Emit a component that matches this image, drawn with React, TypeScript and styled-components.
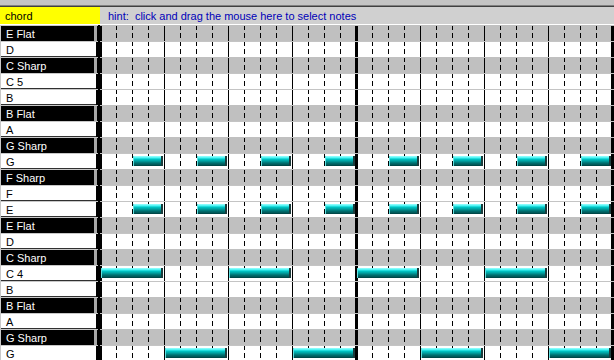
import styled, { createGlobalStyle } from 'styled-components';

const GlobalStyle = createGlobalStyle`
  html, body {
    margin: 0;
    padding: 0;
    background: #c0c0c0;
    overflow: hidden;
  }
  * {
    box-sizing: border-box;
  }
`;

interface Note {
  start: number; // in 16px steps
  length: number;
}

interface PitchRow {
  name: string;
  accidental: boolean;
  notes: Note[];
}

const STEP = 16;

const every = (first: number, gap: number, length: number, count: number): Note[] =>
  Array.from({ length: count }, (_, i) => ({ start: first + i * gap, length }));

const rows: PitchRow[] = [
  { name: 'E Flat', accidental: true, notes: [] },
  { name: 'D', accidental: false, notes: [] },
  { name: 'C Sharp', accidental: true, notes: [] },
  { name: 'C 5', accidental: false, notes: [] },
  { name: 'B', accidental: false, notes: [] },
  { name: 'B Flat', accidental: true, notes: [] },
  { name: 'A', accidental: false, notes: [] },
  { name: 'G Sharp', accidental: true, notes: [] },
  { name: 'G', accidental: false, notes: every(2, 4, 2, 8) },
  { name: 'F Sharp', accidental: true, notes: [] },
  { name: 'F', accidental: false, notes: [] },
  { name: 'E', accidental: false, notes: every(2, 4, 2, 8) },
  { name: 'E Flat', accidental: true, notes: [] },
  { name: 'D', accidental: false, notes: [] },
  { name: 'C Sharp', accidental: true, notes: [] },
  { name: 'C 4', accidental: false, notes: every(0, 8, 4, 4) },
  { name: 'B', accidental: false, notes: [] },
  { name: 'B Flat', accidental: true, notes: [] },
  { name: 'A', accidental: false, notes: [] },
  { name: 'G Sharp', accidental: true, notes: [] },
  { name: 'G', accidental: false, notes: every(4, 8, 4, 4) },
];

const Window = styled.div`
  width: 614px;
  height: 360px;
  overflow: hidden;
  display: flex;
  flex-direction: column;
  background: #c0c0c0;
  font-family: 'Liberation Sans', Arial, sans-serif;
  font-size: 11px;
`;

const TopStrip = styled.div`
  height: 6px;
  flex: none;
  background: #c4c4c4;
  border-bottom: 1px solid #808080;
`;

const Header = styled.div`
  height: 19px;
  flex: none;
  display: flex;
  border-top: 1px solid #404040;
  border-bottom: 1px solid #ffffff;
  background: #d0d0d0;
`;

const ChordBox = styled.div`
  width: 100px;
  flex: none;
  display: flex;
  align-items: center;
  padding-left: 5px;
  padding-top: 1px;
  background: #ffff00;
  color: #000000;
`;

const Hint = styled.div`
  flex: 1;
  display: flex;
  align-items: center;
  padding-left: 8px;
  color: #0000b8;
  white-space: nowrap;
`;

const Body = styled.div`
  flex: 1;
  display: flex;
  min-height: 0;
`;

const LabelColumn = styled.div`
  width: 98px;
  flex: none;
  display: flex;
  flex-direction: column;
  background: #c0c0c0;
`;

const Label = styled.div<{ $accidental: boolean }>`
  height: 16px;
  flex: none;
  display: flex;
  align-items: center;
  padding-left: 5px;
  padding-top: 1px;
  border-top: 1px solid #c8c8c8;
  border-left: 1px solid #c8c8c8;
  background: ${p => (p.$accidental ? '#000000' : '#ffffff')};
  color: ${p => (p.$accidental ? '#ffffff' : '#000000')};
  box-shadow: ${p =>
    p.$accidental
      ? 'inset -1px 0 0 #000000, inset -4px 0 0 #a8a8a8'
      : 'inset -2px 0 0 #000000, inset 0 -1px 0 #303030'};
  white-space: nowrap;
`;

const Grid = styled.div`
  flex: 1;
  display: flex;
  flex-direction: column;
  border-left: 2px solid #000000;
`;

const GridRow = styled.div<{ $accidental: boolean }>`
  position: relative;
  height: 16px;
  flex: none;
  border-top: 1px solid ${p => (p.$accidental ? '#c0c0c0' : '#c4c4c4')};
  background-color: ${p => (p.$accidental ? '#c0c0c0' : '#ffffff')};
  background-image:
    linear-gradient(to right, #000000 3px, transparent 3px),
    linear-gradient(to right, #000000 1px, transparent 1px),
    linear-gradient(to bottom, transparent 5px, ${p => (p.$accidental ? '#c0c0c0' : '#ffffff')} 5px),
    linear-gradient(to right, #000000 1px, transparent 1px);
  background-size: 256px 100%, 64px 100%, 100% 8px, 16px 100%;
  background-position: 255px 0, 0 0, 0 -1px, 0 0;
`;

// notes sit on the roll at their beat position
const NoteBar = styled.div`
  position: absolute;
  top: 2px;
  height: 10px;
  background: linear-gradient(
    to bottom,
    #a0ffff 0,
    #40f0f0 2px,
    #00c8c8 3px,
    #00a0a0 5px,
    #007070 7px,
    #005454 9px,
    #003c3c 10px
  );
  box-shadow: inset -2px 0 0 #1c3c3c, inset 1px 0 0 #60e0e0;
`;

export default function App() {
  return (
    <>
      <GlobalStyle />
      <Window>
        <TopStrip />
        <Header>
          <ChordBox>chord</ChordBox>
          <Hint>hint:&nbsp; click and drag the mouse here to select notes</Hint>
        </Header>
        <Body>
          <LabelColumn>
            {rows.map((row, i) => (
              <Label key={i} $accidental={row.accidental}>
                {row.name}
              </Label>
            ))}
          </LabelColumn>
          <Grid>
            {rows.map((row, i) => (
              <GridRow key={i} $accidental={row.accidental}>
                {row.notes.map((n, j) => (
                  <NoteBar
                    key={j}
                    style={{ left: n.start * STEP + 1, width: n.length * STEP - 2 }}
                  />
                ))}
              </GridRow>
            ))}
          </Grid>
        </Body>
      </Window>
    </>
  );
}
